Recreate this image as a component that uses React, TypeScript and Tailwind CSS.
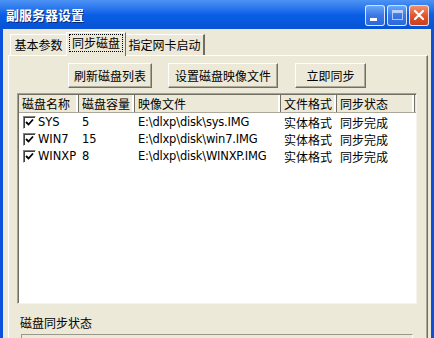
import React from "react";

const cjk = "font-['SimSun','Noto_Sans_CJK_SC',sans-serif]";

type Row = { name: string; size: string; file: string; fmt: string; state: string };

const rows: Row[] = [
  { name: "SYS", size: "5", file: "E:\\dlxp\\disk\\sys.IMG", fmt: "实体格式", state: "同步完成" },
  { name: "WIN7", size: "15", file: "E:\\dlxp\\disk\\win7.IMG", fmt: "实体格式", state: "同步完成" },
  { name: "WINXP", size: "8", file: "E:\\dlxp\\disk\\WINXP.IMG", fmt: "实体格式", state: "同步完成" },
];

const cols = [
  { label: "磁盘名称", w: "w-[60px]" },
  { label: "磁盘容量", w: "w-[56px]" },
  { label: "映像文件", w: "w-[146px]" },
  { label: "文件格式", w: "w-[56px]" },
  { label: "同步状态", w: "w-[78px]" },
];

function TitleButton({ kind }: { kind: "min" | "max" | "close" }) {
  const bg =
    kind === "close"
      ? "bg-gradient-to-b from-[#F09070] via-[#E0552F] to-[#C8401C]"
      : "bg-gradient-to-b from-[#6AA6F8] via-[#3A78E8] to-[#2D68DA]";
  return (
    <div className={`w-[20px] h-[21px] rounded-[3px] border border-white/80 flex items-center justify-center ${bg}`}>
      {kind === "min" && <div className="w-[7px] h-[3px] bg-white mt-[8px] -ml-[3px]" />}
      {kind === "max" && <div className="w-[11px] h-[10px] border border-white/60 border-t-[3px]" />}
      {kind === "close" && (
        <svg width="12" height="12" viewBox="0 0 12 12">
          <path d="M2 2 L10 10 M10 2 L2 10" stroke="white" strokeWidth="2.2" strokeLinecap="round" />
        </svg>
      )}
    </div>
  );
}

function Button({ label, w }: { label: string; w: string }) {
  return (
    <div
      className={`${w} h-[25px] flex items-center justify-center bg-[#ECE9D8] border border-t-white border-l-white border-r-[#716F64] border-b-[#716F64] shadow-[inset_-1px_-1px_0_#ACA899] text-[12px] text-black ${cjk}`}
    >
      {label}
    </div>
  );
}

function Check() {
  return (
    <div className="w-[13px] h-[13px] bg-white border border-t-[#808080] border-l-[#808080] border-r-white border-b-white shadow-[inset_1px_1px_0_#404040] flex items-center justify-center shrink-0">
      <svg width="9" height="9" viewBox="0 0 9 9">
        <path d="M1 4 L3.5 6.5 L8 1.5" stroke="black" strokeWidth="1.8" fill="none" />
      </svg>
    </div>
  );
}

export default function App() {
  return (
    <div className="w-[434px] h-[338px] overflow-hidden flex flex-col bg-[#0A52DC]">
      {/* title bar */}
      <div className="h-[29px] shrink-0 flex items-center justify-between pl-[6px] pr-[5px] bg-gradient-to-b from-[#4C93F4] via-[#0A5FE6] to-[#0753D4]">
        <span className={`text-white font-bold text-[13px] [text-shadow:1px_1px_0_#0A2A7A] ${cjk}`}>
          副服务器设置
        </span>
        <div className="flex gap-[2px] mt-[1px]">
          <TitleButton kind="min" />
          <TitleButton kind="max" />
          <TitleButton kind="close" />
        </div>
      </div>

      {/* body */}
      <div className="flex-1 mx-[3px] bg-[#ECE9D8] flex flex-col">
        {/* tabs */}
        <div className={`h-[26px] flex items-end pl-[7px] text-[12px] text-black ${cjk}`}>
          <div className="h-[21px] w-[56px] flex items-center justify-center border-t border-l border-white">
            基本参数
          </div>
          <div className="h-[24px] w-[60px] -mb-[1px] z-10 bg-[#ECE9D8] flex items-start justify-center pt-[2px] border-t border-l border-white border-r border-r-[#716F64]">
            <span className="px-[2px] leading-[16px] outline-1 outline-dotted outline-black">同步磁盘</span>
          </div>
          <div className="h-[21px] w-[79px] flex items-center justify-center border-t border-white border-r-2 border-r-[#716F64]">
            指定网卡启动
          </div>
        </div>

        {/* tab panel */}
        <div className="flex-1 ml-[5px] mr-[3px] border-t border-l border-white border-r border-r-[#716F64] shadow-[inset_-1px_0_0_#ACA899] flex flex-col">
          {/* buttons */}
          <div className="flex pl-[59px] pt-[7px] gap-[16px]">
            <Button label="刷新磁盘列表" w="w-[84px]" />
            <Button label="设置磁盘映像文件" w="w-[110px]" />
            <div className="ml-[1px]">
              <Button label="立即同步" w="w-[71px]" />
            </div>
          </div>

          {/* list view */}
          <div className="ml-[8px] mt-[5px] w-[400px] h-[211px] bg-white border border-t-[#A0A0A0] border-l-[#A0A0A0] border-r-[#F4F3EE] border-b-[#F4F3EE] shadow-[inset_1px_1px_0_#716F64] flex flex-col">
            <div className={`h-[18px] mt-[1px] ml-[1px] flex bg-[#ECE9D8] border-b border-[#ACA899] text-[12px] text-black ${cjk}`}>
              {cols.map((c) => (
                <div
                  key={c.label}
                  className={`${c.w} h-full flex items-center pl-[3px] border-r border-r-[#716F64] shadow-[inset_-2px_0_0_#ffffff]`}
                >
                  {c.label}
                </div>
              ))}
              <div className="flex-1" />
            </div>
            <div className="pt-[1px]">
              {rows.map((r) => (
                <div key={r.name} className="h-[17px] flex items-center text-[12px] text-black font-['Tahoma','DejaVu_Sans','Liberation_Sans',sans-serif]">
                  <div className="w-[60px] flex items-center pl-[5px] gap-[1px]">
                    <Check />
                    <span className="pl-[1px] text-[11.5px]">{r.name}</span>
                  </div>
                  <div className="w-[56px] pl-[4px] text-[11.5px]">{r.size}</div>
                  <div className="w-[146px] pl-[4px] text-[11.5px] tracking-[-0.2px]">{r.file}</div>
                  <div className={`w-[56px] pl-[4px] ${cjk}`}>{r.fmt}</div>
                  <div className={`w-[78px] pl-[4px] ${cjk}`}>{r.state}</div>
                </div>
              ))}
            </div>
          </div>

          {/* status label */}
          <div className={`mt-[12px] ml-[11px] text-[12px] text-black leading-[14px] ${cjk}`}>磁盘同步状态</div>
          <div className="mt-[4px] ml-[12px] w-[392px] flex-1 border-t border-l border-[#9A9888] border-r border-r-white" />
        </div>
      </div>
    </div>
  );
}
